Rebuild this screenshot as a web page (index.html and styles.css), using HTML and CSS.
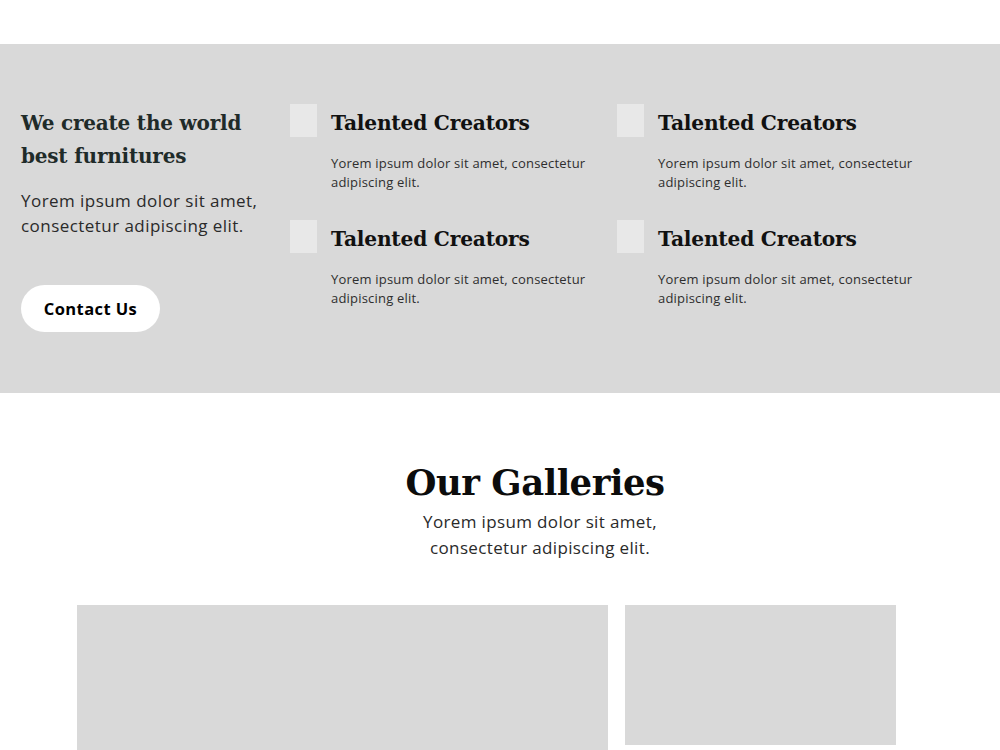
FILE: index.html
```html
<!DOCTYPE html>
<html lang="en">
<head>
<meta charset="utf-8">
<title>Furniture</title>
<link rel="stylesheet" href="styles.css">
</head>
<body>
  <section class="features">
    <div class="intro">
      <h2 class="intro-title">We create the world best furnitures</h2>
      <p class="intro-text">Yorem ipsum dolor sit amet, consectetur adipiscing elit.</p>
      <a class="btn" href="#">Contact Us</a>
    </div>
    <div class="feature-grid">
      <div class="feature">
        <div class="feature-icon"></div>
        <div class="feature-body">
          <h3 class="feature-title">Talented Creators</h3>
          <p class="feature-text">Yorem ipsum dolor sit amet, consectetur adipiscing elit.</p>
        </div>
      </div>
      <div class="feature">
        <div class="feature-icon"></div>
        <div class="feature-body">
          <h3 class="feature-title">Talented Creators</h3>
          <p class="feature-text">Yorem ipsum dolor sit amet, consectetur adipiscing elit.</p>
        </div>
      </div>
      <div class="feature">
        <div class="feature-icon"></div>
        <div class="feature-body">
          <h3 class="feature-title">Talented Creators</h3>
          <p class="feature-text">Yorem ipsum dolor sit amet, consectetur adipiscing elit.</p>
        </div>
      </div>
      <div class="feature">
        <div class="feature-icon"></div>
        <div class="feature-body">
          <h3 class="feature-title">Talented Creators</h3>
          <p class="feature-text">Yorem ipsum dolor sit amet, consectetur adipiscing elit.</p>
        </div>
      </div>
    </div>
  </section>

  <section class="galleries">
    <header class="galleries-head">
      <h2 class="galleries-title">Our Galleries</h2>
      <p class="galleries-text">Yorem ipsum dolor sit amet,<br>consectetur adipiscing elit.</p>
    </header>
    <div class="gallery-grid">
      <div class="gallery-item gallery-wide"></div>
      <div class="gallery-item gallery-small"></div>
    </div>
  </section>
</body>
</html>
```
FILE: styles.css
```css
* {
  box-sizing: border-box;
}

html, body {
  margin: 0;
  padding: 0;
  background: #ffffff;
}

body {
  font-family: "Open Sans", "Noto Sans", sans-serif;
  color: #2b2b2b;
  padding-top: 44px;
  overflow: hidden;
  height: 750px;
}

/* Feature band */
.features {
  background: #d9d9d9;
  height: 349px;
  display: flex;
  padding: 60px 0 0 21px;
}

.intro {
  width: 269px;
  display: flex;
  flex-direction: column;
  align-items: flex-start;
}

.intro-title {
  margin: 3px 0 0;
  width: 240px;
  font-family: "DejaVu Serif", "Liberation Serif", serif;
  font-weight: 700;
  font-size: 20px;
  line-height: 33px;
  color: #1f2b29;
  letter-spacing: -0.2px;
}

.intro-text {
  margin: 15px 0 0;
  font-size: 17px;
  line-height: 25px;
  letter-spacing: 0.45px;
  color: #2a2a2a;
  width: 260px;
}

.btn {
  margin-top: 47px;
  width: 139px;
  height: 47px;
  border-radius: 24px;
  background: #ffffff;
  color: #000000;
  text-decoration: none;
  font-weight: 700;
  font-size: 16.5px;
  letter-spacing: 0.4px;
  display: flex;
  align-items: center;
  justify-content: center;
}

.feature-grid {
  display: grid;
  grid-template-columns: 327px 327px;
  row-gap: 28px;
  align-content: start;
}

.feature {
  display: flex;
  gap: 14px;
}

.feature-icon {
  width: 27px;
  height: 33px;
  background: #e8e8e8;
  flex: none;
}

.feature-title {
  margin: 0;
  padding-top: 2px;
  font-family: "DejaVu Serif", "Liberation Serif", serif;
  font-weight: 700;
  font-size: 20.2px;
  line-height: 34px;
  color: #111111;
  letter-spacing: -0.2px;
}

.feature-text {
  margin: 14px 0 0;
  font-size: 13px;
  line-height: 19px;
  letter-spacing: 0.2px;
  color: #2e2e2e;
  width: 275px;
}

/* Galleries */
.galleries {
  padding: 66px 7px 0 77px;
}

.galleries-head {
  text-align: center;
}

.galleries-title {
  margin: 0;
  font-family: "DejaVu Serif", "Liberation Serif", serif;
  font-weight: 700;
  font-size: 35.5px;
  line-height: 48px;
  color: #0c0c0c;
  letter-spacing: -0.5px;
}

.galleries-text {
  margin: 2px 0 0;
  font-size: 17px;
  line-height: 26px;
  letter-spacing: 0.35px;
  color: #2a2a2a;
  padding-left: 10px;
}

.gallery-grid {
  margin-top: 44px;
  display: flex;
  gap: 17px;
  align-items: flex-start;
}

.gallery-item {
  background: #d9d9d9;
}

.gallery-wide {
  width: 531px;
  height: 200px;
}

.gallery-small {
  width: 271px;
  height: 140px;
}
```
